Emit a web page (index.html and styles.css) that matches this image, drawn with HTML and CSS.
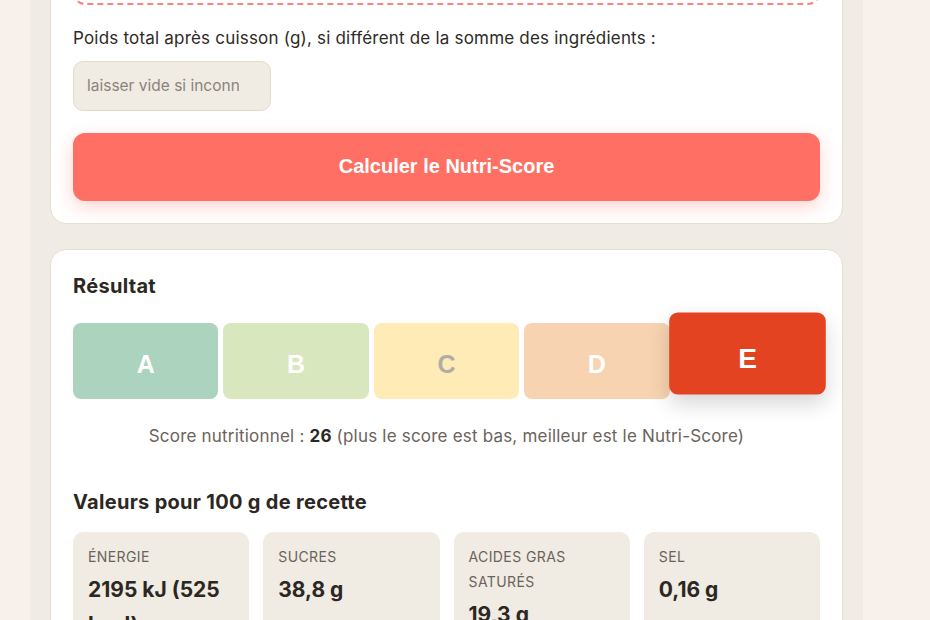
FILE: index.html
```html
<!DOCTYPE html>
<html lang="fr">

<head>
    <meta charset="UTF-8">
    <meta name="viewport" content="width=device-width, initial-scale=1.0">
    <title>Calculateur Nutri-Score</title>
    <link rel="stylesheet" href="styles.css">
</head>

<body>
    <div class="page">
        <section class="card card-form">
            <div class="dropzone"></div>

            <label for="total_weight">Poids total après cuisson (g), si différent de la somme des ingrédients :</label>
            <input type="text" id="total_weight" name="total_weight" placeholder="laisser vide si inconnu">

            <button type="button" class="btn-calc">Calculer le Nutri-Score</button>
        </section>

        <section class="card card-result">
            <h2>Résultat</h2>
            <div class="score-row">
                <div class="grade grade-a">A</div>
                <div class="grade grade-b">B</div>
                <div class="grade grade-c">C</div>
                <div class="grade grade-d">D</div>
                <div class="grade grade-e active">E</div>
            </div>
            <p class="score-text">Score nutritionnel : <strong>26</strong> (plus le score est bas, meilleur est le Nutri-Score)</p>

            <h3>Valeurs pour 100 g de recette</h3>
            <div class="values">
                <div class="value-tile">
                    <div class="value-label">Énergie</div>
                    <div class="value-num">2195 kJ (525 kcal)</div>
                </div>
                <div class="value-tile">
                    <div class="value-label">Sucres</div>
                    <div class="value-num">38,8 g</div>
                </div>
                <div class="value-tile">
                    <div class="value-label">Acides gras saturés</div>
                    <div class="value-num">19,3 g</div>
                </div>
                <div class="value-tile">
                    <div class="value-label">Sel</div>
                    <div class="value-num">0,16 g</div>
                </div>
            </div>
        </section>
    </div>
</body>

</html>
```

FILE: styles.css
```css
body {
    font-family: Inter, "Noto Sans", sans-serif;
    background-color: #f8f1eb;
    color: #2b2722;
    margin: 0;
    overflow: hidden;
}

.page {
    width: 833px;
    box-sizing: border-box;
    margin: -110px 0 0 30px;
    padding: 20px;
    min-height: 800px;
    background-color: #f0ece5;
    display: flex;
    flex-direction: column;
    gap: 25px;
}

.card {
    background: #fff;
    border: 1px solid #e6dfcd;
    border-radius: 16px;
    padding: 22px;
}

.dropzone {
    height: 72px;
    box-sizing: border-box;
    border: 2px dashed #f7877d;
    border-radius: 12px;
    margin-bottom: 21px;
}

label {
    display: block;
    font-size: 17px;
    line-height: 25.6px;
    letter-spacing: 0.2px;
    color: #2e2a25;
}

input {
    display: block;
    width: 198px;
    height: 50px;
    box-sizing: border-box;
    margin-top: 9px;
    padding: 0 31px 0 13px;
    border: 1px solid #e3dbc6;
    border-radius: 10px;
    background-color: #f0ebe3;
    font-family: Inter, "Noto Sans", sans-serif;
    font-size: 15.5px;
    color: #2b2722;
}

input::placeholder {
    color: #8b837b;
}

.btn-calc {
    display: block;
    width: 100%;
    height: 68px;
    margin-top: 22px;
    border: none;
    border-radius: 12px;
    background-color: #ff6f63;
    color: #fff;
    font-family: "Liberation Sans", Arial, sans-serif;
    font-size: 20px;
    font-weight: bold;
    cursor: pointer;
    box-shadow: 0 6px 18px rgba(255, 111, 99, 0.3);
}

h2, h3 {
    margin: 0;
    font-size: 20px;
    line-height: 28px;
    font-weight: 700;
    letter-spacing: 0.3px;
    color: #2b2722;
}

.score-row {
    display: grid;
    grid-template-columns: repeat(5, 1fr);
    gap: 5px;
    margin-top: 23px;
}

.grade {
    height: 76px;
    box-sizing: border-box;
    padding-top: 8px;
    border-radius: 8px;
    display: flex;
    align-items: center;
    justify-content: center;
    font-family: "Liberation Sans", Arial, sans-serif;
    font-size: 25px;
    font-weight: bold;
    color: #fff;
}

.grade-a { background-color: #abd3bd; }
.grade-b { background-color: #d8e7bd; }
.grade-c { background-color: #feebb5; color: #b1ada5; }
.grade-d { background-color: #f7d3b1; }
.grade-e { background-color: #e44322; }

.grade.active {
    font-size: 26px;
    transform: translateY(-7.5px) scale(1.08);
    box-shadow: 0 8px 20px rgba(0, 0, 0, 0.16);
}

.score-text {
    margin: 25px 0 0;
    text-align: center;
    font-size: 17px;
    line-height: 25.6px;
    letter-spacing: 0.2px;
    color: #6b635b;
}

.score-text strong {
    color: #2b2722;
}

h3 {
    margin-top: 39px;
}

.values {
    display: grid;
    grid-template-columns: repeat(4, 1fr);
    gap: 14px;
    margin-top: 16px;
}

.value-tile {
    background-color: #f0ebe3;
    border-radius: 10px;
    padding: 12px 15px;
    min-height: 150px;
}

.value-label {
    font-size: 14px;
    line-height: 25px;
    letter-spacing: 0.4px;
    text-transform: uppercase;
    color: #6b635b;
}

.value-num {
    margin-top: 3px;
    font-size: 21px;
    line-height: 35px;
    font-weight: 700;
    color: #2b2722;
}
```
